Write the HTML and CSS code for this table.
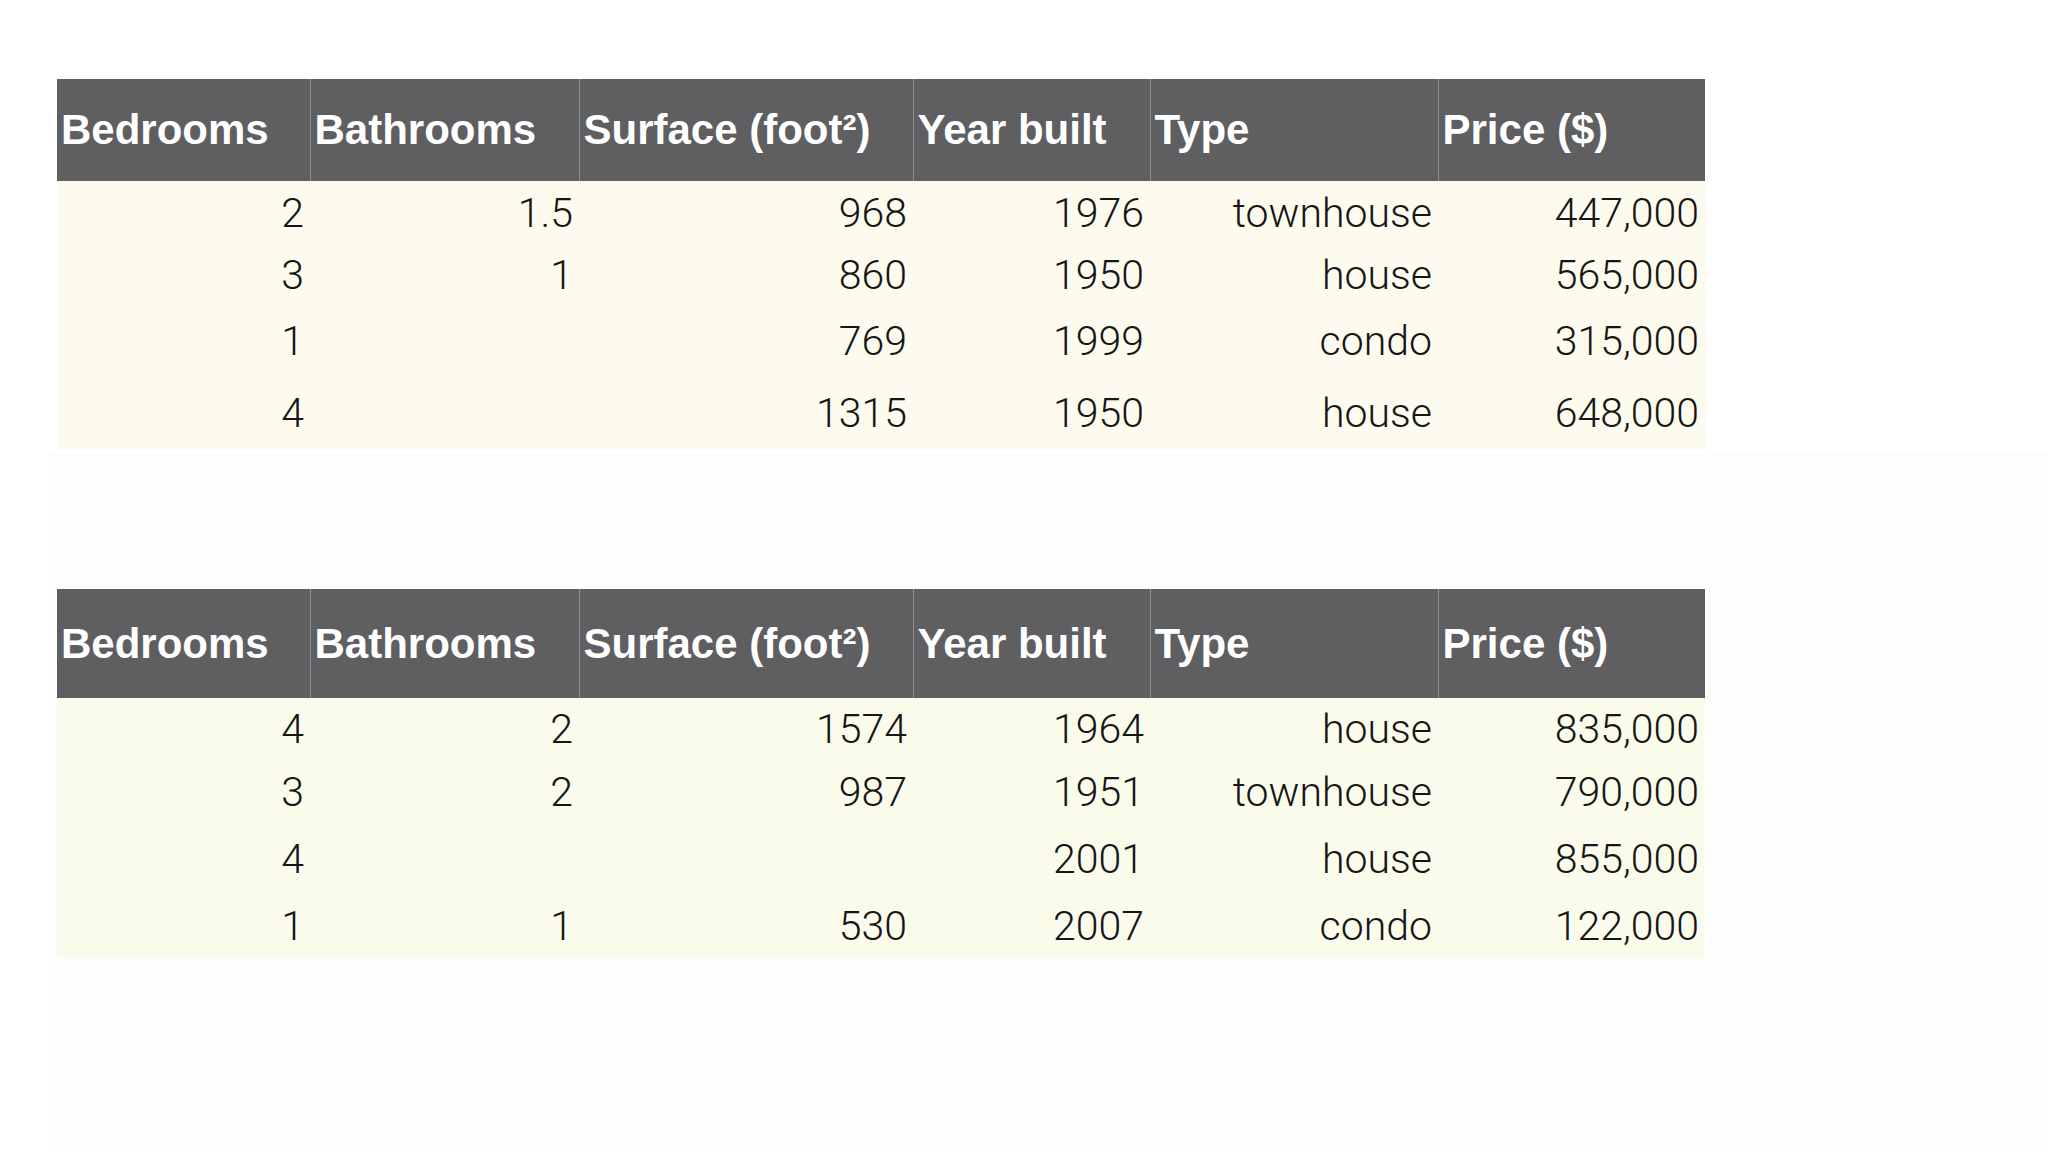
FILE: index.html
```html
<!DOCTYPE html>
<html>
<head>
<meta charset="utf-8">
<link rel="stylesheet" href="styles.css">
</head>
<body>
<main class="page">
  <section class="block block-top">
    <table class="data t1">
      <colgroup>
        <col class="c1"><col class="c2"><col class="c3"><col class="c4"><col class="c5"><col class="c6">
      </colgroup>
      <thead>
        <tr><th>Bedrooms</th><th>Bathrooms</th><th>Surface (foot²)</th><th>Year built</th><th>Type</th><th>Price ($)</th></tr>
      </thead>
      <tbody>
        <tr><td>2</td><td>1.5</td><td>968</td><td>1976</td><td>townhouse</td><td>447,000</td></tr>
        <tr><td>3</td><td>1</td><td>860</td><td>1950</td><td>house</td><td>565,000</td></tr>
        <tr><td>1</td><td></td><td>769</td><td>1999</td><td>condo</td><td>315,000</td></tr>
        <tr><td>4</td><td></td><td>1315</td><td>1950</td><td>house</td><td>648,000</td></tr>
      </tbody>
    </table>
  </section>
  <section class="block block-bottom">
    <table class="data t2">
      <colgroup>
        <col class="c1"><col class="c2"><col class="c3"><col class="c4"><col class="c5"><col class="c6">
      </colgroup>
      <thead>
        <tr><th>Bedrooms</th><th>Bathrooms</th><th>Surface (foot²)</th><th>Year built</th><th>Type</th><th>Price ($)</th></tr>
      </thead>
      <tbody>
        <tr><td>4</td><td>2</td><td>1574</td><td>1964</td><td>house</td><td>835,000</td></tr>
        <tr><td>3</td><td>2</td><td>987</td><td>1951</td><td>townhouse</td><td>790,000</td></tr>
        <tr><td>4</td><td></td><td></td><td>2001</td><td>house</td><td>855,000</td></tr>
        <tr><td>1</td><td>1</td><td>530</td><td>2007</td><td>condo</td><td>122,000</td></tr>
      </tbody>
    </table>
  </section>
</main>
</body>
</html>
```

FILE: styles.css
```css
html, body {
  margin: 0;
  padding: 0;
  background: #ffffff;
}

.page {
  width: 2048px;
  height: 1152px;
  overflow: hidden;
  display: flex;
  flex-direction: column;
}

.block-top {
  padding: 79px 0 0 57px;
  height: 452px;
  box-sizing: border-box;
  flex: none;
}

.block-bottom {
  flex: 1;
  margin-left: 48px;
  padding: 137px 0 0 9px;
  background: #fdfdfd;
}

.data {
  border-collapse: collapse;
  table-layout: fixed;
  width: 1648px;
  font-family: "Liberation Sans", Arial, sans-serif;
}

.c1 { width: 253px; }
.c2 { width: 269px; }
.c3 { width: 334px; }
.c4 { width: 237px; }
.c5 { width: 288px; }
.c6 { width: 267px; }

.data th {
  background: #5f5e60;
  color: #ffffff;
  font-weight: bold;
  font-size: 42px;
  line-height: 1;
  text-align: left;
  padding: 0 0 0 4px;
  white-space: nowrap;
  border-left: 1px solid #8e8d8f;
  vertical-align: middle;
}

.data th:first-child {
  border-left: none;
}

.t1 thead tr { height: 102px; }
.t2 thead tr { height: 109px; }

.data td {
  font-family: "Roboto", "Liberation Sans", Arial, sans-serif;
  font-weight: 300;
  font-size: 41px;
  line-height: 1;
  color: #161616;
  text-align: right;
  padding: 0 6px 0 0;
  vertical-align: middle;
  white-space: nowrap;
}

.t1 td { background: #fdfbee; }
.t2 td { background: #fbfbeb; }

.t1 tbody tr:nth-child(1) { height: 64px; }
.t1 tbody tr:nth-child(2) { height: 61px; }
.t1 tbody tr:nth-child(3) { height: 71px; }
.t1 tbody tr:nth-child(4) { height: 73px; }

.t2 tbody tr:nth-child(1) { height: 62px; }
.t2 tbody tr:nth-child(2) { height: 64px; }
.t2 tbody tr:nth-child(3) { height: 70px; }
.t2 tbody tr:nth-child(4) { height: 64px; }
```
